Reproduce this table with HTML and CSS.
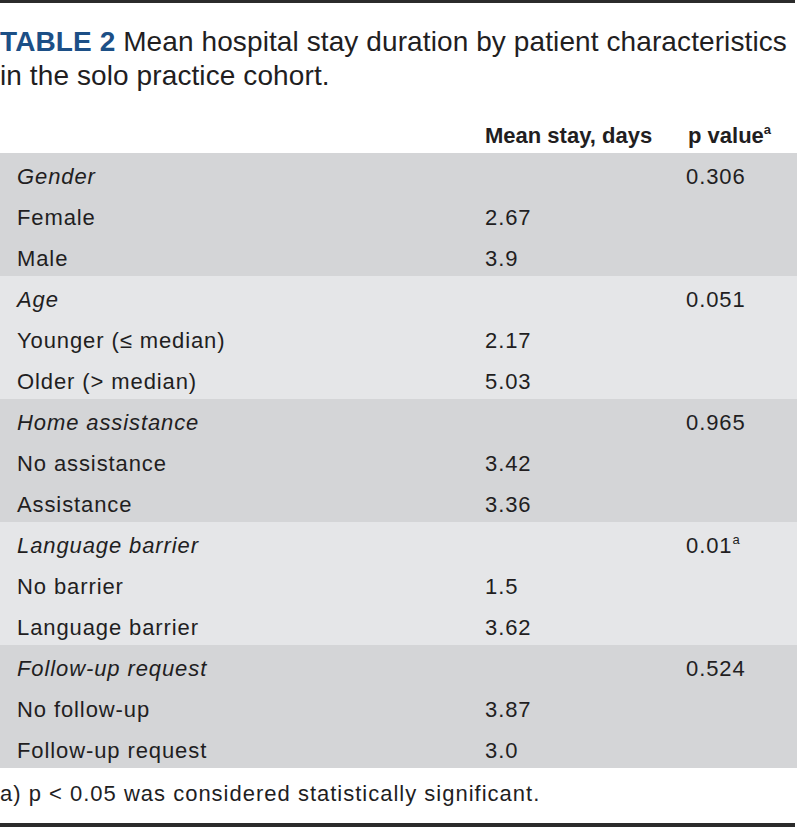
FILE: index.html
```html
<!DOCTYPE html>
<html lang="en">
<head>
<meta charset="utf-8">
<title>Table 2</title>
<link rel="stylesheet" href="styles.css">
</head>
<body>
<div class="page">
  <div class="rule rule-top"></div>
  <p class="caption"><span class="label">TABLE 2</span> Mean hospital stay duration by patient characteristics in the solo practice cohort.</p>
  <table class="data">
    <colgroup>
      <col class="c1"><col class="c2"><col class="c3">
    </colgroup>
    <thead>
      <tr><th></th><th>Mean stay, days</th><th>p value<sup>a</sup></th></tr>
    </thead>
    <tbody class="dark">
      <tr><td class="grp">Gender</td><td></td><td>0.306</td></tr>
      <tr><td>Female</td><td>2.67</td><td></td></tr>
      <tr><td>Male</td><td>3.9</td><td></td></tr>
    </tbody>
    <tbody class="light">
      <tr><td class="grp">Age</td><td></td><td>0.051</td></tr>
      <tr><td>Younger (≤ median)</td><td>2.17</td><td></td></tr>
      <tr><td>Older (&gt; median)</td><td>5.03</td><td></td></tr>
    </tbody>
    <tbody class="dark">
      <tr><td class="grp">Home assistance</td><td></td><td>0.965</td></tr>
      <tr><td>No assistance</td><td>3.42</td><td></td></tr>
      <tr><td>Assistance</td><td>3.36</td><td></td></tr>
    </tbody>
    <tbody class="light">
      <tr><td class="grp">Language barrier</td><td></td><td>0.01<sup>a</sup></td></tr>
      <tr><td>No barrier</td><td>1.5</td><td></td></tr>
      <tr><td>Language barrier</td><td>3.62</td><td></td></tr>
    </tbody>
    <tbody class="dark">
      <tr><td class="grp">Follow-up request</td><td></td><td>0.524</td></tr>
      <tr><td>No follow-up</td><td>3.87</td><td></td></tr>
      <tr><td>Follow-up request</td><td>3.0</td><td></td></tr>
    </tbody>
  </table>
  <p class="footnote">a) p &lt; 0.05 was considered statistically significant.</p>
  <div class="rule rule-bottom"></div>
</div>
</body>
</html>
```

FILE: styles.css
```css
html, body {
  margin: 0;
  padding: 0;
  background: #ffffff;
}

.page {
  width: 797px;
  font-family: "Liberation Sans", Arial, sans-serif;
  color: #221e1f;
}

.rule {
  width: 795px;
  background: #2b2b2b;
}

.rule-top {
  height: 3px;
}

.rule-bottom {
  height: 4px;
  margin-top: 14px;
}

.caption {
  margin: 22px 0 0 0;
  font-size: 28px;
  line-height: 34px;
  letter-spacing: 0.1px;
}

.label {
  color: #1c4f86;
  font-weight: bold;
}

.data {
  margin-top: 19px;
  width: 797px;
  border-collapse: collapse;
  table-layout: fixed;
  font-size: 22px;
  letter-spacing: 0.9px;
}

.c1 { width: 468px; }
.c2 { width: 201px; }
.c3 { width: 128px; }

.data th,
.data td {
  height: 41px;
  box-sizing: border-box;
  padding: 6px 0 0 17px;
  line-height: 35px;
  text-align: left;
  vertical-align: top;
  white-space: nowrap;
}

.data th {
  font-weight: bold;
  letter-spacing: 0;
}

.data th:last-child {
  padding-left: 19px;
}

.data sup {
  font-size: 13px;
  line-height: 0;
  vertical-align: 9px;
  letter-spacing: 0;
}

.dark { background: #d4d5d7; }
.light { background: #e5e6e8; }

.grp {
  font-style: italic;
}

.footnote {
  margin: 11px 0 0 0;
  font-size: 22px;
  line-height: 30px;
  letter-spacing: 1px;
}
```
